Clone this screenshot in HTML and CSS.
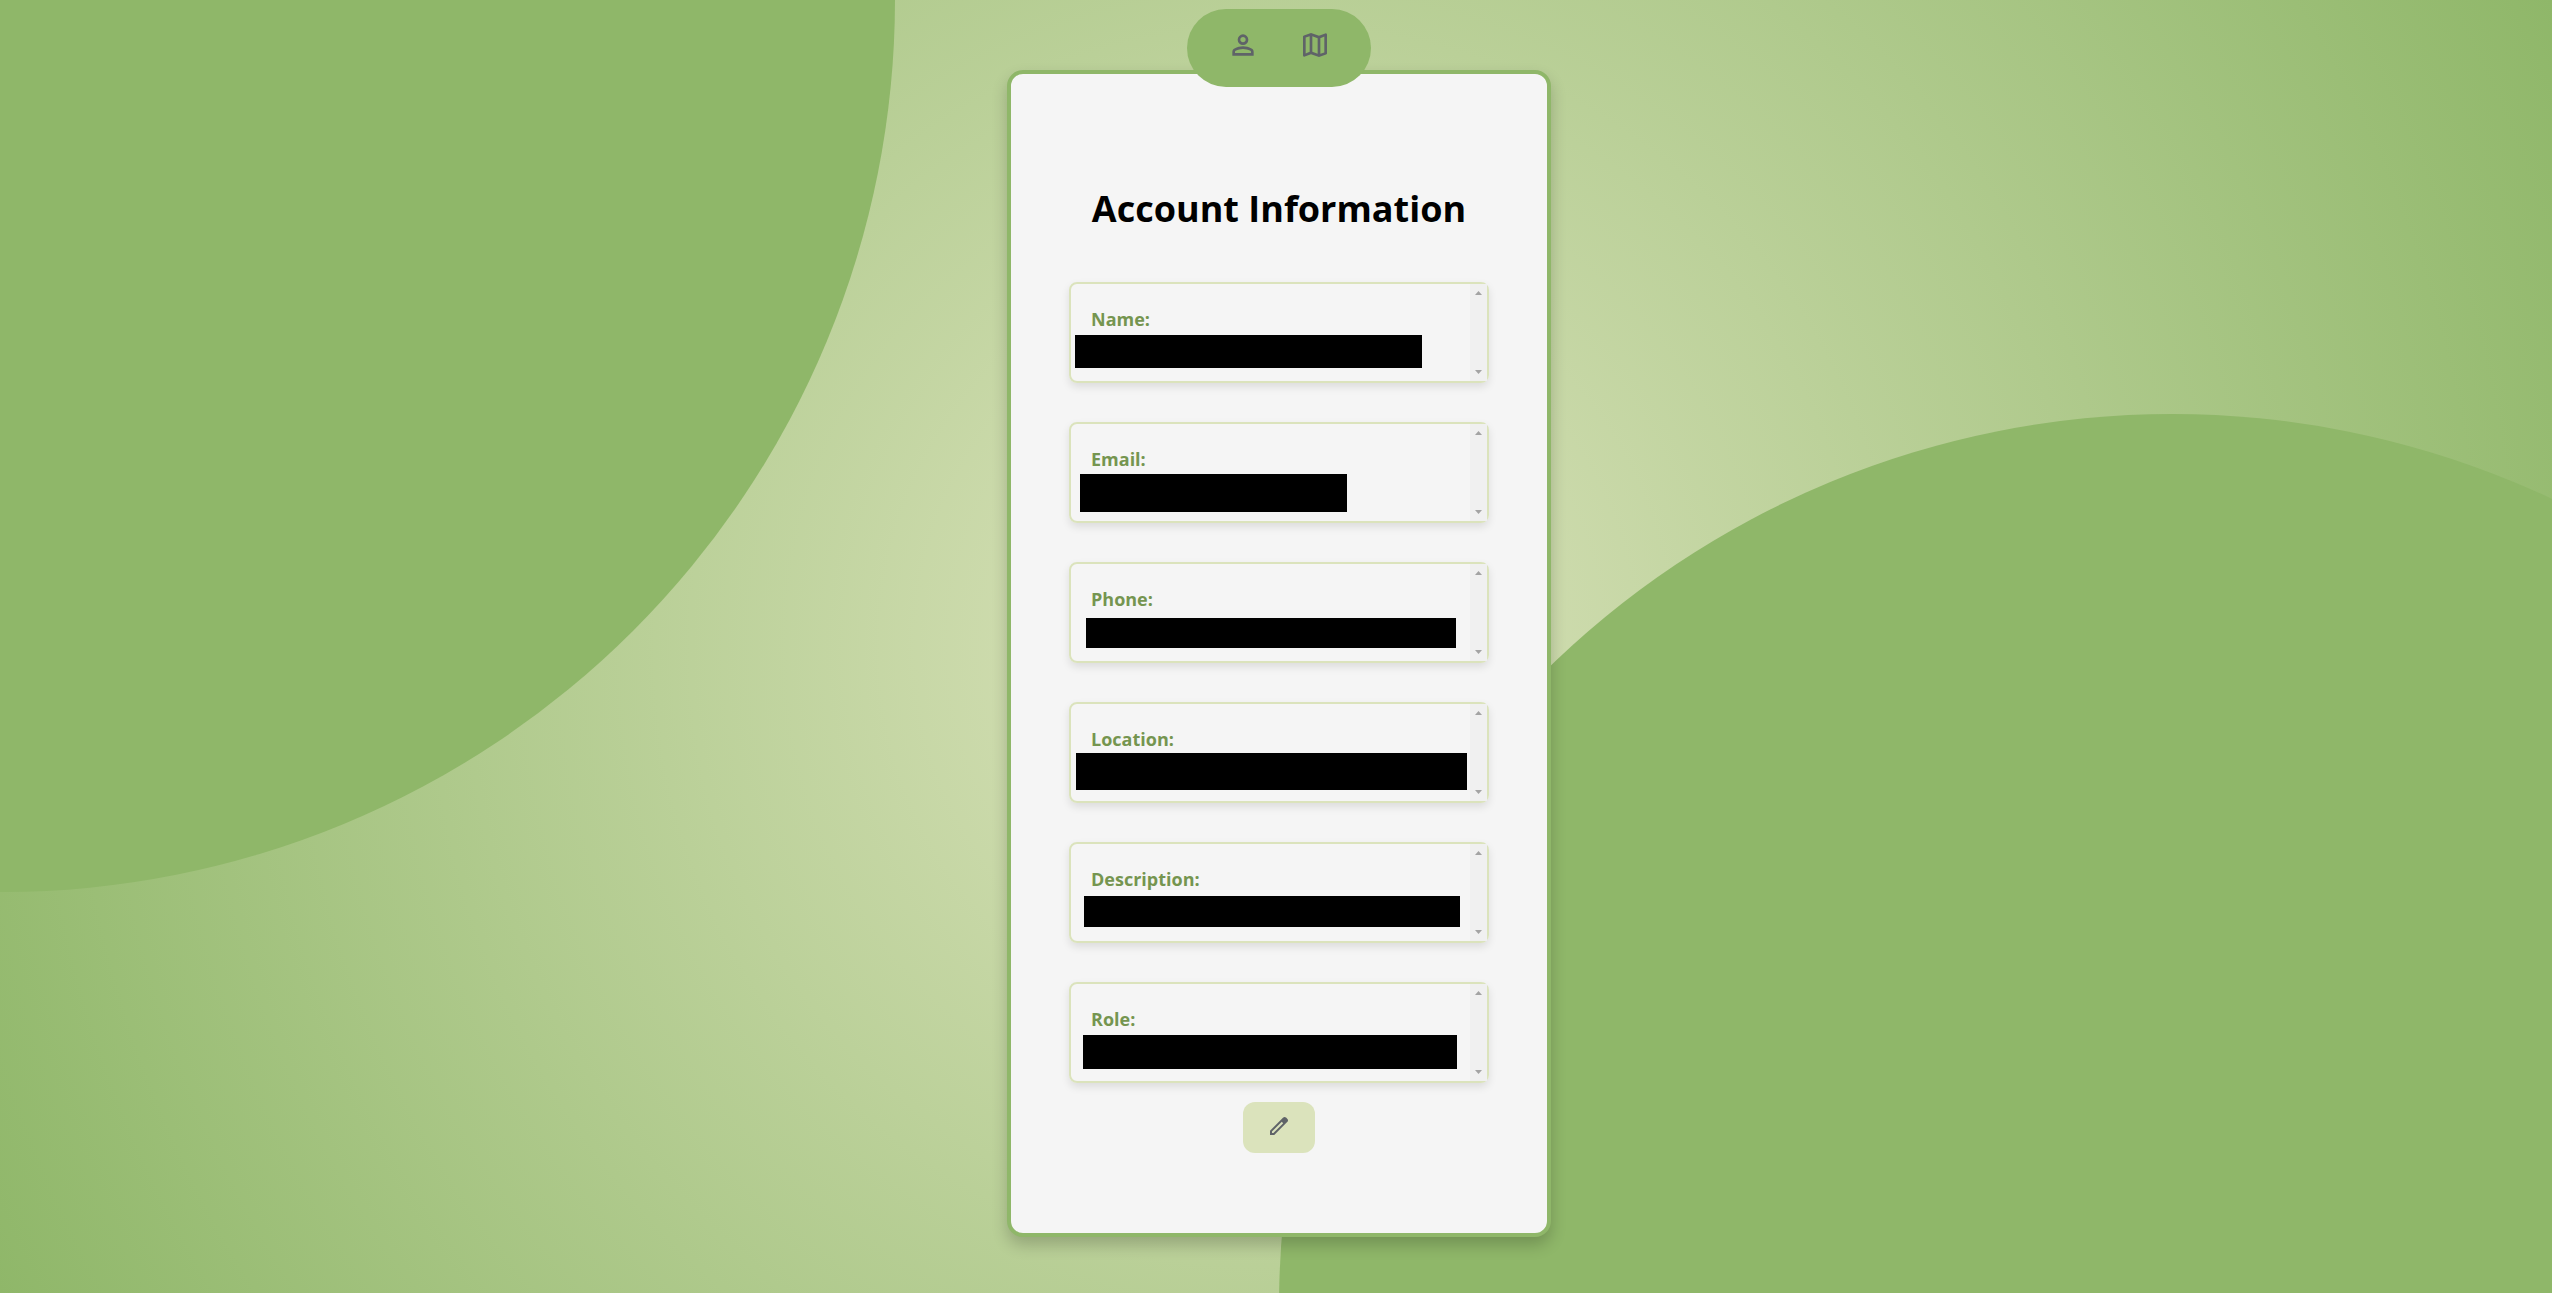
FILE: index.html
```html
<!DOCTYPE html>
<html lang="en">
<head>
<meta charset="utf-8">
<meta name="viewport" content="width=device-width, initial-scale=1">
<title>Account Information</title>
<link rel="stylesheet" href="styles.css">
</head>
<body>
<div class="backdrop" aria-hidden="true">
  <div class="circle circle-left"></div>
  <div class="circle circle-right"></div>
</div>
<div class="page">
  <nav class="nav" aria-label="Main">
    <a href="#account" aria-label="Account"><svg class="nav-icon" viewBox="0 -960 960 960"><path d="M480-480q-66 0-113-47t-47-113q0-66 47-113t113-47q66 0 113 47t47 113q0 66-47 113t-113 47ZM160-160v-112q0-34 17.500-62.500T224-378q62-31 126-46.500T480-440q66 0 130 15.500T736-378q29 15 46.500 43.500T800-272v112H160Zm80-80h480v-32q0-11-5.500-20T700-306q-54-27-109-40.500T480-360q-56 0-111 13.500T260-306q-9 5-14.500 14t-5.500 20v32Zm240-320q33 0 56.500-23.500T560-640q0-33-23.500-56.500T480-720q-33 0-56.500 23.500T400-640q0 33 23.500 56.500T480-560Z"/></svg></a>
    <a href="#map" aria-label="Map"><svg class="nav-icon" viewBox="0 -960 960 960"><path d="m600-120-240-84-186 72q-20 8-37-4.500T120-170v-560q0-13 7.500-23t20.500-15l212-72 240 84 186-72q20-8 37 4.500t17 33.500v560q0 13-7.500 23T812-192l-212 72Zm-40-98v-468l-160-56v468l160 56Zm80 0 120-40v-474l-120 46v468Zm-440-10 120-46v-468l-120 40v474Z"/></svg></a>
  </nav>
  <main class="card" id="account">
    <h1 class="title">Account Information</h1>
    <dl class="fields">
      <div class="field"><dt>Name:</dt><dd class="value value-name"></dd>
        <div class="scrollbar"><span class="arrow arrow-up"></span><span class="arrow arrow-down"></span></div></div>
      <div class="field"><dt>Email:</dt><dd class="value value-email"></dd>
        <div class="scrollbar"><span class="arrow arrow-up"></span><span class="arrow arrow-down"></span></div></div>
      <div class="field"><dt>Phone:</dt><dd class="value value-phone"></dd>
        <div class="scrollbar"><span class="arrow arrow-up"></span><span class="arrow arrow-down"></span></div></div>
      <div class="field"><dt>Location:</dt><dd class="value value-location"></dd>
        <div class="scrollbar"><span class="arrow arrow-up"></span><span class="arrow arrow-down"></span></div></div>
      <div class="field"><dt>Description:</dt><dd class="value value-description"></dd>
        <div class="scrollbar"><span class="arrow arrow-up"></span><span class="arrow arrow-down"></span></div></div>
      <div class="field"><dt>Role:</dt><dd class="value value-role"></dd>
        <div class="scrollbar"><span class="arrow arrow-up"></span><span class="arrow arrow-down"></span></div></div>
    </dl>
    <button class="edit" type="button" aria-label="Edit account"><svg class="edit-icon" viewBox="0 -960 960 960"><path d="M200-200h57l391-391-57-57-391 391v57Zm-80 80v-170l528-527q12-11 26.500-17t30.500-6q16 0 31 6t26 18l55 56q12 11 17.500 26t5.500 30q0 16-5.500 30.500T817-647L290-120H120Zm640-584-56-56 56 56Zm-141 85-28-29 57 57-29-28Z"/></svg></button>
  </main>
</div>
</body>
</html>
```
FILE: styles.css
```css
* {
  box-sizing: border-box;
}

body {
  margin: 0;
  min-height: 100vh;
  font-family: "Segoe UI", "Open Sans", "Noto Sans", sans-serif;
  background: radial-gradient(circle, #dbe3bc, #8fb769) no-repeat;
}

/* Large circles behind the card */
.backdrop {
  position: absolute;
  inset: 0;
  overflow: hidden;
}

.circle {
  position: absolute;
  width: 70vw;
  height: 70vw;
  border-radius: 50%;
  background: #8fb769;
}

.circle-left {
  top: calc(-35vw - 1px);
  left: calc(-35vw + 2px);
}

.circle-right {
  top: 32vh;
  left: calc(50vw + 3px);
}

.page {
  position: relative;
  display: flex;
  flex-direction: column;
  align-items: center;
  padding: 9px 0 56px 6px;
}

/* The pill overlaps the top edge of the card */
.nav {
  z-index: 1;
  display: flex;
  gap: 40px;
  padding: 20px 40px 26px;
  margin-bottom: -17px;
  border-radius: 40px;
  background: #8fb769;
}

.nav-icon {
  display: block;
  width: 32px;
  height: 32px;
  fill: #5f6368;
}

.card {
  display: flex;
  flex-direction: column;
  align-items: center;
  width: 544px;
  max-width: 100%;
  padding: 108px 58px 80px;
  border: 4px solid #8fb769;
  border-radius: 16px;
  background: #f5f5f5;
  box-shadow: 0 8px 16px rgba(0, 0, 0, 0.2);
}

.title {
  margin: 0 0 46px;
  font-size: 36px;
  line-height: 54px;
  font-weight: 700;
  white-space: nowrap;
  color: #000;
}

.fields {
  display: flex;
  flex-direction: column;
  gap: 39px;
  width: 100%;
  margin: 0 0 19px;
}

.field {
  position: relative;
  display: flex;
  justify-content: space-between;
  height: 101px;
  padding-left: 20px;
  border: 2px solid #dbe3bc;
  border-radius: 8px;
  box-shadow: 0 4px 8px rgba(0, 0, 0, 0.1);
}

.field dt {
  padding-top: 22px;
  font-size: 18px;
  line-height: 26px;
  font-weight: 700;
  color: #759550;
}

.scrollbar {
  display: flex;
  flex-direction: column;
  justify-content: space-between;
  align-items: center;
  width: 17px;
  padding: 7px 0;
  background: #f0f0f0;
}

.arrow {
  width: 7px;
  height: 4px;
  background: #a3a3a3;
}

.arrow-up {
  clip-path: polygon(50% 0, 100% 100%, 0 100%);
}

.arrow-down {
  clip-path: polygon(0 0, 100% 0, 50% 100%);
}

/* Blacked-out values, laid over each field */
.value {
  position: absolute;
  margin: 0;
  background: #000;
}

.value-name {
  top: 51px;
  left: 4px;
  width: 347px;
  height: 33px;
}

.value-email {
  top: 50px;
  left: 9px;
  width: 267px;
  height: 38px;
}

.value-phone {
  top: 54px;
  left: 15px;
  width: 370px;
  height: 30px;
}

.value-location {
  top: 49px;
  left: 5px;
  width: 391px;
  height: 37px;
}

.value-description {
  top: 52px;
  left: 13px;
  width: 376px;
  height: 31px;
}

.value-role {
  top: 51px;
  left: 12px;
  width: 374px;
  height: 34px;
}

.edit {
  padding: 12px 24px 15px;
  border: 0;
  border-radius: 12px;
  background: #dbe3bc;
}

.edit-icon {
  display: block;
  width: 24px;
  height: 24px;
  fill: #5f6368;
}
```
